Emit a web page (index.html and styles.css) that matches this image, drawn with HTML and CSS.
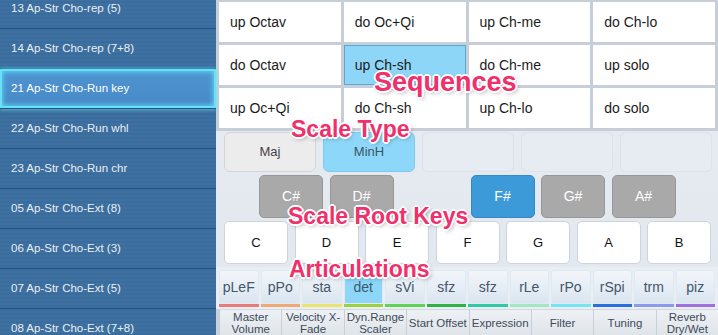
FILE: index.html
```html
<!DOCTYPE html>
<html lang="en">
<head>
  <meta charset="UTF-8">
  <meta name="viewport" content="width=device-width, initial-scale=1.0">
  <title>Sequence Player</title>
  <link rel="stylesheet" href="styles.css">
</head>
<body>
  <div class="app">
    <ul class="patches">
      <li>13 Ap-Str Cho-rep (5)</li>
      <li>14 Ap-Str Cho-rep (7+8)</li>
      <li class="selected">21 Ap-Str Cho-Run key</li>
      <li>22 Ap-Str Cho-Run whl</li>
      <li>23 Ap-Str Cho-Run chr</li>
      <li>05 Ap-Str Cho-Ext (8)</li>
      <li>06 Ap-Str Cho-Ext (3)</li>
      <li>07 Ap-Str Cho-Ext (5)</li>
      <li>08 Ap-Str Cho-Ext (7+8)</li>
    </ul>

    <div class="panel">
      <div class="sequences">
        <div class="seq">up Octav</div>
        <div class="seq">do Oc+Qi</div>
        <div class="seq">up Ch-me</div>
        <div class="seq">do Ch-lo</div>
        <div class="seq">do Octav</div>
        <div class="seq active">up Ch-sh</div>
        <div class="seq">do Ch-me</div>
        <div class="seq">up solo</div>
        <div class="seq">up Oc+Qi</div>
        <div class="seq">do Ch-sh</div>
        <div class="seq">up Ch-lo</div>
        <div class="seq">do solo</div>
      </div>

      <div class="keyboard">
        <div class="scales">
          <div class="scale">Maj</div>
          <div class="scale active">MinH</div>
          <div class="scale empty"></div>
          <div class="scale empty"></div>
          <div class="scale empty"></div>
        </div>
        <div class="keys sharps">
          <div class="key sharp">C#</div>
          <div class="key sharp">D#</div>
          <div class="key spacer"></div>
          <div class="key sharp root">F#</div>
          <div class="key sharp">G#</div>
          <div class="key sharp">A#</div>
        </div>
        <div class="keys naturals">
          <div class="key natural">C</div>
          <div class="key natural">D</div>
          <div class="key natural">E</div>
          <div class="key natural">F</div>
          <div class="key natural">G</div>
          <div class="key natural">A</div>
          <div class="key natural">B</div>
        </div>
      </div>

      <div class="articulations">
        <div class="art c1">pLeF</div>
        <div class="art c2">pPo</div>
        <div class="art c3">sta</div>
        <div class="art c4 active">det</div>
        <div class="art c5">sVi</div>
        <div class="art c6">sfz</div>
        <div class="art c7">sfz</div>
        <div class="art c8">rLe</div>
        <div class="art c9">rPo</div>
        <div class="art c10">rSpi</div>
        <div class="art c11">trm</div>
        <div class="art c12">piz</div>
      </div>

      <div class="tabs">
        <div class="tab">Master<br>Volume</div>
        <div class="tab">Velocity X-<br>Fade</div>
        <div class="tab">Dyn.Range<br>Scaler</div>
        <div class="tab">Start Offset</div>
        <div class="tab">Expression</div>
        <div class="tab">Filter</div>
        <div class="tab">Tuning</div>
        <div class="tab">Reverb<br>Dry/Wet</div>
      </div>
    </div>

    <!-- callout labels over the screenshot -->
    <div class="callout seq-label">Sequences</div>
    <div class="callout type-label">Scale Type</div>
    <div class="callout root-label">Scale Root Keys</div>
    <div class="callout art-label">Articulations</div>
  </div>
</body>
</html>
```

FILE: styles.css
```css
body {
  margin: 0;
  font-family: "Liberation Sans", Arial, sans-serif;
  overflow: hidden;
}
.app {
  position: relative;
  display: flex;
  width: 718px;
  height: 335px;
  overflow: hidden;
  background: #e5eaf0;
}

/* patch list */
.patches {
  list-style: none;
  margin: -11px 0 0;
  padding: 0;
  width: 216px;
  flex: none;
  background: #2f5f8e;
}
.patches li {
  height: 39px;
  line-height: 39px;
  padding-left: 11px;
  font-size: 11.5px;
  color: #e9eff5;
  border-bottom: 1px solid #22507b;
  background: repeating-linear-gradient(to bottom, #3a6c9c 0, #3a6c9c 2px, #3e71a1 2px, #3e71a1 4px);
}
.patches li.selected {
  position: relative;
  color: #fff;
  background: linear-gradient(to bottom, #4f95d2, #4689c6);
  box-shadow: inset 0 0 0 2px #66e2f8, inset 0 0 5px 3px #5fd0f0, 0 0 4px #66e2f8;
  z-index: 1;
}

/* right panel */
.panel {
  flex: 1;
  display: flex;
  flex-direction: column;
}
.sequences {
  height: 126px;
  padding: 2px 3px 3px;
  display: grid;
  grid-template-columns: repeat(4, 1fr);
  grid-template-rows: repeat(3, 40px);
  gap: 3px;
  background: #c7ced7;
}
.seq {
  background: #fff;
  font-size: 14px;
  color: #1b1b1b;
  line-height: 40px;
  padding-left: 11px;
}
.seq.active {
  background: #8ed6f8;
  box-shadow: inset 0 0 0 1px #5ba7d6;
}

.keyboard {
  height: 132px;
  padding: 1px 0 3px 8px;
  display: flex;
  flex-direction: column;
  gap: 3px;
  background: linear-gradient(to bottom, #e6ebf1, #e2e8ef);
}
.scales {
  display: flex;
  gap: 7px;
  height: 40px;
}
.scale {
  width: 90px;
  border: 1px solid #d2d6db;
  border-radius: 6px;
  background: #ececec;
  font-size: 13px;
  color: #454545;
  text-align: center;
  line-height: 38px;
}
.scale.active {
  background: #8dd8fa;
  border-color: #80c8ea;
  color: #3b5567;
}
.scale.empty {
  background: #e7ecf2;
  border-color: #dde3ea;
}

.keys {
  display: flex;
  gap: 6.5px;
  height: 43px;
}
.sharps {
  padding-left: 35px;
}
.key {
  width: 64px;
  box-sizing: border-box;
  border-radius: 5px;
  text-align: center;
  line-height: 41px;
  font-size: 13px;
}
.key.sharp {
  background: #a9a9a9;
  border: 1px solid #979797;
  color: #fff;
  font-size: 14px;
}
.key.root {
  background: #3d9ad9;
  border-color: #3389c9;
}
.key.spacer {
  visibility: hidden;
}
.key.natural {
  background: #fff;
  border: 1px solid #ced4db;
  color: #111;
}

.articulations {
  height: 36px;
  padding: 3px 3px;
  display: grid;
  grid-template-columns: repeat(12, 1fr);
  gap: 2px;
  background: #e9eef4;
}
.art {
  border-radius: 3px 3px 0 0;
  background: linear-gradient(to bottom, #f2f6fa, #dae5f0);
  box-shadow: inset 0 0 0 1px #e0e8f0;
  font-size: 14px;
  color: #45566a;
  text-align: center;
  line-height: 34px;
  border-bottom: 3px solid #ccc;
}
.art.active {
  background: #8dd6f7;
  color: #3c5a72;
}
.c1 { border-bottom-color: #e87a78; }
.c2 { border-bottom-color: #f1a877; }
.c3 { border-bottom-color: #e9e46e; }
.c4 { border-bottom-color: #9fcf3f; }
.c5 { border-bottom-color: #5fd453; }
.c6 { border-bottom-color: #2eb245; }
.c7 { border-bottom-color: #31c9a4; }
.c8 { border-bottom-color: #a3e6c4; }
.c9 { border-bottom-color: #72e4f2; }
.c10 { border-bottom-color: #2a6fe0; }
.c11 { border-bottom-color: #8b9bea; }
.c12 { border-bottom-color: #9f6fde; }

.tabs {
  height: 26px;
  padding-left: 3px;
  display: grid;
  grid-template-columns: repeat(8, 1fr);
  background: #c9d0d7;
}
.tab {
  display: flex;
  align-items: center;
  justify-content: center;
  text-align: center;
  font-size: 11.5px;
  line-height: 12px;
  color: #3d4b5a;
  background: linear-gradient(to bottom, #eef1f4, #dfe4ea);
  border-left: 1px solid #c8cfd6;
  border-top: 1px solid #d3d9df;
}

/* pink labels */
.callout {
  position: absolute;
  font-size: 23px;
  font-weight: bold;
  line-height: 1;
  color: #f0306b;
  white-space: nowrap;
  text-shadow: 0 0 2px #fff, 0 0 2px #fff, 2px 0 0 #fff, -2px 0 0 #fff, 0 2px 0 #fff, 0 -2px 0 #fff, 1px 1px 0 #fff, -1px -1px 0 #fff, 1px -1px 0 #fff, -1px 1px 0 #fff, 2px 2px 4px rgba(0, 0, 0, 0.35);
  z-index: 5;
}
.seq-label {
  font-size: 27px;
  left: 374px;
  top: 69px;
}
.type-label {
  left: 291px;
  top: 118px;
}
.root-label {
  left: 288px;
  top: 205px;
}
.art-label {
  left: 289px;
  top: 258px;
}
```
